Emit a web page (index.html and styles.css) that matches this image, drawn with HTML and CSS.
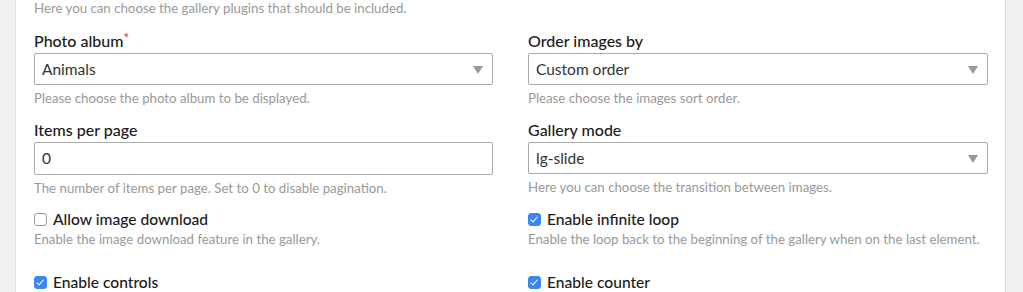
FILE: index.html
```html
<!DOCTYPE html>
<html lang="en">
<head>
  <meta charset="UTF-8">
  <title>Gallery settings</title>
  <link rel="stylesheet" href="styles.css">
</head>
<body>
  <div class="panel">
    <p class="lead">Here you can choose the gallery plugins that should be included.</p>

    <div class="fields">
      <div class="widget">
        <label class="label">Photo album<span class="req">*</span></label>
        <div class="select">Animals<span class="arrow"></span></div>
        <p class="help">Please choose the photo album to be displayed.</p>
      </div>
      <div class="widget">
        <label class="label">Order images by</label>
        <div class="select">Custom order<span class="arrow"></span></div>
        <p class="help">Please choose the images sort order.</p>
      </div>

      <div class="widget">
        <label class="label">Items per page</label>
        <div class="text-input">0</div>
        <p class="help">The number of items per page. Set to 0 to disable pagination.</p>
      </div>
      <div class="widget">
        <label class="label">Gallery mode</label>
        <div class="select">lg-slide<span class="arrow"></span></div>
        <p class="help">Here you can choose the transition between images.</p>
      </div>

      <div class="widget check-widget">
        <label class="check"><span class="box"></span>Allow image download</label>
        <p class="help">Enable the image download feature in the gallery.</p>
      </div>
      <div class="widget check-widget">
        <label class="check"><span class="box checked"></span>Enable infinite loop</label>
        <p class="help">Enable the loop back to the beginning of the gallery when on the last element.</p>
      </div>

      <div class="widget check-widget">
        <label class="check"><span class="box checked"></span>Enable controls</label>
      </div>
      <div class="widget check-widget">
        <label class="check"><span class="box checked"></span>Enable counter</label>
      </div>
    </div>
  </div>
</body>
</html>
```

FILE: styles.css
```css
* {
  box-sizing: border-box;
  margin: 0;
  padding: 0;
}

body {
  font-family: 'Lato', 'Liberation Sans', sans-serif;
  background-color: #f0f0f0;
  color: #222;
  padding: 0 17px 0 15px;
  height: 292px;
  overflow: hidden;
}

.panel {
  background-color: #fff;
  border-left: 1px solid #ddd;
  border-right: 1px solid #ddd;
  min-height: 292px;
  padding: 0 16px 0 18px;
}

.lead {
  font-size: 13.25px;
  line-height: 16px;
  color: #999;
  margin-bottom: 15px;
}

.fields {
  display: grid;
  grid-template-columns: 459px 460px;
  column-gap: 35px;
  row-gap: 14px;
}

.label {
  display: block;
  font-size: 16px;
  font-weight: 500;
  line-height: 20px;
  margin-bottom: 2px;
  color: #1a1a1a;
}

.req {
  color: #d33;
  font-size: 13px;
  vertical-align: top;
  line-height: 14px;
}

.select,
.text-input {
  position: relative;
  height: 32px;
  border: 1px solid #aaa;
  border-radius: 2px;
  font-size: 15.5px;
  line-height: 30px;
  padding: 0 7px;
  color: #333;
}

.text-input {
  height: 33px;
  line-height: 31px;
}

.arrow {
  position: absolute;
  right: 9px;
  top: 12px;
  width: 0;
  height: 0;
  border-left: 5px solid transparent;
  border-right: 5px solid transparent;
  border-top: 8px solid #999;
}

.help {
  font-size: 13.25px;
  line-height: 16px;
  color: #999;
  margin-top: 5px;
}

.check-widget .help {
  margin-top: 2px;
}

.check-widget {
  margin-top: -1px;
}

.check-widget:nth-child(n+7) {
  margin-top: 11px;
}

.check {
  display: flex;
  align-items: center;
  font-size: 15.6px;
  font-weight: 500;
  line-height: 20px;
  color: #1a1a1a;
}

.box {
  width: 13px;
  height: 13px;
  border: 1px solid #999;
  border-radius: 3px;
  margin-right: 6px;
  position: relative;
}

.box.checked {
  background-color: #3a87f2;
  border-color: #3a87f2;
}

.box.checked::after {
  content: "";
  position: absolute;
  left: 3px;
  top: 1px;
  width: 3px;
  height: 6px;
  border-right: 1.5px solid #fff;
  border-bottom: 1.5px solid #fff;
  transform: rotate(40deg);
}
```
